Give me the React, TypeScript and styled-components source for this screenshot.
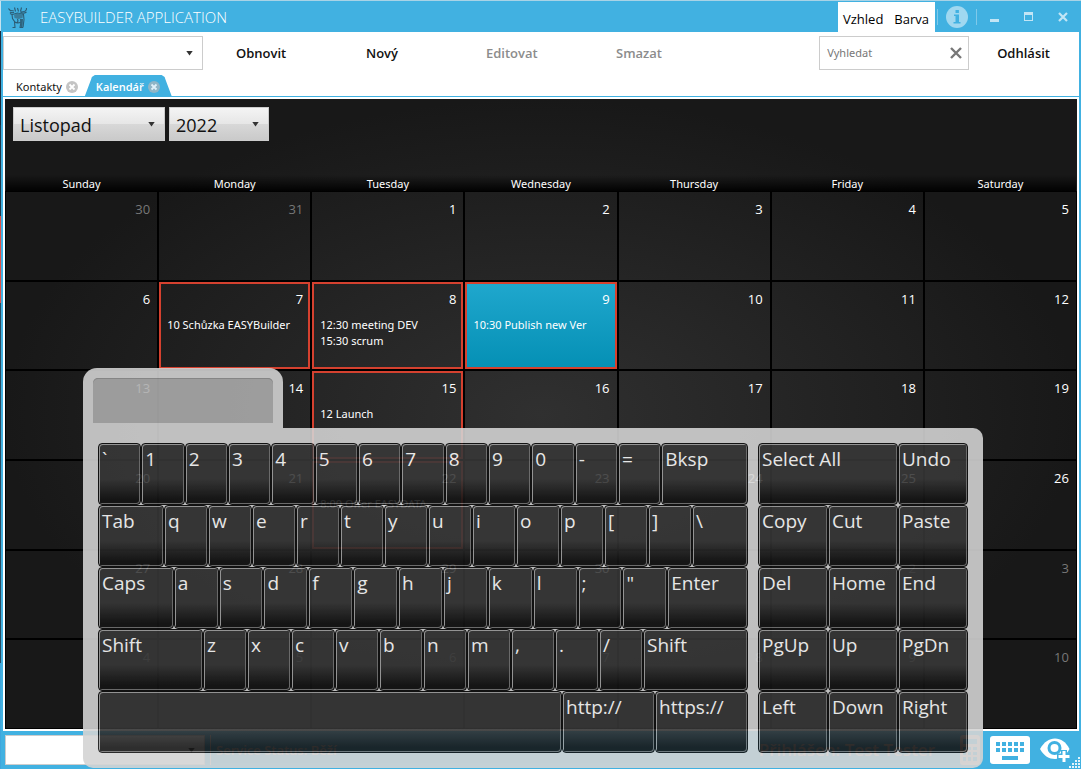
import React from "react";
import styled, { createGlobalStyle } from "styled-components";

const BLUE = "#41b1e1";

const GlobalStyle = createGlobalStyle`
  *, *::before, *::after { box-sizing: border-box; }
  body { margin: 0; background: ${BLUE}; }
  body, button, input, select {
    font-family: "Open Sans", "Noto Sans", "Liberation Sans", sans-serif;
    font-size: 12px;
  }
  button { border: 0; padding: 0; background: none; color: inherit; cursor: pointer; white-space: nowrap; }
  svg { display: block; }
`;

const SMALL_FONT = `"Noto Sans", "Open Sans", sans-serif`;

const Window = styled.div`
  position: relative;
  display: flex;
  flex-direction: column;
  min-height: 100vh;
  padding: 0 1px 0 3px;
  border-top: 1px solid #a9d3e6;
  background:
    linear-gradient(#c5e3f0 30px, #1c2b3c 30px 124px, #20394c 124px 215px, #e0524a 215px 302px, #2a4c62 302px 662px, #3fa6dd 662px) 0 0 / 1px 100% no-repeat,
    ${BLUE};
`;

const TitleBar = styled.header`
  display: flex;
  align-items: center;
  height: 31px;
  padding-left: 4px;
  color: #fff;
`;

const AppTitle = styled.h1`
  flex: 1;
  margin: 0 0 0 11px;
  font-size: 15px;
  font-weight: 300;
  line-height: 30px;
`;

const ThemeMenu = styled.div`
  display: flex;
  align-self: stretch;
  align-items: center;
  gap: 11px;
  margin-top: 1px;
  padding: 4px 6px 0 5px;
  background: #fff;
  color: #000;
  button { font-size: 13px; }
`;

const WindowButtons = styled.div`
  display: flex;
  align-items: center;
  align-self: stretch;
  color: #c2e5f5;
`;

const WindowButton = styled.button<{ $w: number; $line?: boolean }>`
  display: flex;
  justify-content: center;
  align-items: center;
  width: ${(p) => p.$w}px;
  height: 16px;
  border-right: ${(p) => (p.$line ? "1px solid #7fc9ea" : "0")};
`;

const Sheet = styled.main`
  display: flex;
  flex: 1;
  flex-direction: column;
  margin-right: 1px;
  background: #fff;
`;

const Toolbar = styled.div`
  display: flex;
  align-items: center;
  height: 41px;
  margin-bottom: 2px;
  padding-right: 29px;
`;

const SelectBox = styled.div`
  position: relative;
  display: flex;
  svg { position: absolute; right: 10px; top: calc(50% - 2px); pointer-events: none; }
`;

const PlainSelect = styled.select<{ $h: number }>`
  appearance: none;
  width: 200px;
  height: ${(p) => p.$h}px;
  border: 1px solid #ccc;
  border-radius: 0;
  background: #fff;
`;

const Commands = styled.div`
  display: grid;
  grid-template-columns: 130px 120px 130px 130px;
  flex: 1;
  padding-left: 33px;
`;

const Command = styled.button`
  font-size: 13px;
  font-weight: 600;
  line-height: 20px;
  text-align: left;
  color: #111;
  &:disabled { color: #8c8c8c; }
`;

const SearchBox = styled.label`
  display: flex;
  align-items: center;
  width: 150px;
  height: 34px;
  margin-right: 28px;
  padding: 0 6px 0 7px;
  border: 1px solid #ccc;
`;

const SearchInput = styled.input`
  flex: 1;
  min-width: 0;
  border: 0;
  padding: 0;
  outline: 0;
  font-family: ${SMALL_FONT};
  font-size: 11px;
  background: none;
  &::placeholder { color: #777; opacity: 1; }
`;

const Tabs = styled.div`
  display: flex;
  height: 22px;
  border-bottom: 1px solid ${BLUE};
`;

const Tab = styled.div<{ $active?: boolean }>`
  display: flex;
  align-items: center;
  gap: 4px;
  padding: ${(p) => (p.$active ? "2px 12px 0 11px" : "2px 7px 0 13px")};
  background: ${(p) => (p.$active ? BLUE : "none")};
  color: ${(p) => (p.$active ? "#fff" : "#111")};
  clip-path: ${(p) =>
    p.$active
      ? "polygon(0 100%, 6px 5px, 7px 2px, 10px 0, calc(100% - 10px) 0, calc(100% - 7px) 2px, calc(100% - 6px) 5px, 100% 100%)"
      : "none"};
`;

const TabLabel = styled.button<{ $active?: boolean }>`
  font-family: ${(p) => (p.$active ? "inherit" : SMALL_FONT)};
  font-size: 11px;
  font-weight: ${(p) => (p.$active ? 600 : 400)};
  line-height: 20px;
`;

const CalendarPanel = styled.section`
  display: flex;
  flex: 1;
  flex-direction: column;
  margin: 2px;
  padding: 0 1px 1px;
  background: radial-gradient(ellipse 50% 50% at 50% 50%, #303030, #181818);
`;

const Pickers = styled.div`
  display: flex;
  align-items: flex-start;
  gap: 4px;
  height: 76px;
  padding: 8px 7px;
`;

const PickerSelect = styled.select<{ $w: number }>`
  appearance: none;
  width: ${(p) => p.$w}px;
  height: 34px;
  padding: 1px 6px 0;
  border: 1px solid #ccc;
  border-radius: 0;
  background: linear-gradient(#f4f4f4, #e6e6e6 50%, #d8d8d8 50%, #cacaca);
  font-size: 18px;
  color: #111;
`;

const CalendarTable = styled.table`
  display: flex;
  flex: 1;
  flex-direction: column;
  color: #fff;
  tr { display: grid; grid-template-columns: repeat(7, minmax(0, 1fr)); gap: 2px; }
  thead { display: block; padding-bottom: 1px; background: linear-gradient(rgba(0,0,0,0), #000); }
  tbody { display: grid; flex: 1; grid-template-rows: repeat(6, minmax(0, 1fr)); gap: 2px; }
`;

const DayName = styled.th`
  height: 16px;
  padding: 0;
  font-family: ${SMALL_FONT};
  font-size: 11px;
  font-weight: 400;
  line-height: 18px;
`;

const DayCell = styled.td<{ $events?: boolean; $today?: boolean }>`
  min-height: 60px;
  padding: 6px 5px 0 6px;
  border: 2px solid ${(p) => (p.$events ? "#d5412f" : "transparent")};
  background: ${(p) => (p.$today ? "linear-gradient(#1fa7cd, #0590b5)" : "none")};
  box-shadow: 0 0 0 1px #000;
`;

const DayNumber = styled.div<{ $muted?: boolean }>`
  font-size: 13px;
  line-height: 18px;
  text-align: right;
  color: ${(p) => (p.$muted ? "#777" : "#fff")};
`;

const EventList = styled.ul`
  margin: 9px 0 0;
  padding: 0;
  list-style: none;
  font-family: ${SMALL_FONT};
  font-size: 11px;
  line-height: 16px;
  white-space: nowrap;
`;

const StatusBar = styled.footer`
  display: flex;
  align-items: center;
  height: 38px;
  padding: 0 10px 0 2px;
  color: #ead0c6;
`;

const StatusText = styled.span<{ $size: number; $push?: boolean }>`
  margin-left: ${(p) => (p.$push ? "auto" : "5px")};
  padding-left: 5px;
  border-left: ${(p) => (p.$push ? "0" : "1px solid #ead0c6")};
  font-size: ${(p) => p.$size}px;
  font-weight: 600;
  line-height: 30px;
`;

const StatusIcons = styled.div`
  display: flex;
  align-items: center;
  gap: 10px;
  margin-left: 25px;
`;

const Grip = styled.svg`
  position: absolute;
  right: 1px;
  bottom: 1px;
`;

const Keyboard = styled.div`
  position: absolute;
  left: 83px;
  right: 98px;
  bottom: 1px;
  opacity: 0.89;
`;

const KeyboardTab = styled.div`
  width: 200px;
  height: 60px;
  padding: 10px 10px 5px;
  border-radius: 14px 14px 0 0;
  background: #d4d4d4;
`;

const KeyboardHandle = styled.div`
  height: 45px;
  border-radius: 5px 5px 0 0;
  background: #acacac;
  box-shadow: inset 0 1px 0 #929292;
`;

const KeyboardBody = styled.div`
  display: flex;
  gap: 10px;
  padding: 15px;
  border-radius: 0 10px 10px 10px;
  background: #d4d4d4;
`;

const KeyBlock = styled.div<{ $grow: number }>`
  flex: ${(p) => p.$grow} 1 0;
  min-width: 0;
`;

const KeyRow = styled.div<{ $widths: number[] }>`
  display: grid;
  grid-template-columns: ${(p) => p.$widths.map((w) => `minmax(0, ${w}fr)`).join(" ")};
`;

const Key = styled.button`
  height: 62px;
  padding: 0 0 30px 3px;
  border: 1px solid #101010;
  border-radius: 4px;
  background: linear-gradient(#383838 58%, #151515 92%);
  box-shadow: inset 1px 1px 0 #a2a2a2, inset -1px -1px 0 #747474;
  color: #fff;
  font-size: 19px;
  line-height: 30px;
  text-align: left;
`;

type KeySpec = [string, number];
const each = (chars: string, width: number): KeySpec[] => chars.split("").map((c) => [c, width]);

const mainRows: KeySpec[][] = [
  [...each("`1234567890-=", 1), ["Bksp", 2]],
  [["Tab", 66], ...each("qwertyuiop[]", 44), ["\\", 56]],
  [["Caps", 76], ...each("asdfghjkl;\"", 45), ["Enter", 81]],
  [["Shift", 105], ...each("zxcvbnm,./", 44), ["Shift", 105]],
  [[" ", 464], ["http://", 93], ["https://", 93]],
];

const sideRows: KeySpec[][] = [
  [["Select All", 2], ["Undo", 1]],
  [["Copy", 1], ["Cut", 1], ["Paste", 1]],
  [["Del", 1], ["Home", 1], ["End", 1]],
  [["PgUp", 1], ["Up", 1], ["PgDn", 1]],
  [["Left", 1], ["Down", 1], ["Right", 1]],
];

const dayNames = ["Sunday", "Monday", "Tuesday", "Wednesday", "Thursday", "Friday", "Saturday"];
const events: Record<number, string[]> = {
  7: ["10 Schůzka EASYBuilder"],
  8: ["12:30 meeting DEV", "15:30 scrum"],
  9: ["10:30 Publish new Ver"],
  15: ["12 Launch"],
  22: ["8:00 Offer EASYDATA"],
};

const days = Array.from({ length: 42 }, (_, i) => {
  const n = i - 1;
  if (n < 1) return { day: n + 31, muted: true };
  if (n > 30) return { day: n - 30, muted: true };
  return { day: n, muted: false };
});
const weeks = Array.from({ length: 6 }, (_, w) => days.slice(w * 7, w * 7 + 7));

const Arrow = () => (
  <svg width="7" height="5" viewBox="0 0 7 5"><path d="M0.3 0h6.4L3.5 4.6z" fill="#333" /></svg>
);

const Logo = () => (
  <svg width="22" height="24" viewBox="0 0 22 24" fill="none" stroke="#2c5c74" strokeWidth="1.1">
    <path d="M1.500 3.500c1 2 3 2.500 5 2M3 7c1.500 1 3 .8 4 0M7.500 2.500l1 4M10.500 3l1 3.500M19.500 3c.5 3-2 4-6 4M19.500 7c-2 1.500-4 1.500-6 .5M14.500 2.500l-1 4" />
    <path d="M3 8.500l2 1 .5 4 2 3 .5 6M5.500 9.500l5-1.500 6 1.500.5 5-1 8M10.500 14l.5 2-1 2M13.500 14l.5 3-1 5.500M8 17c2 1.500 4 1 6 0M5.500 22.500h3M12.500 22.500h3.500" />
    <path d="M7 9.500l5-1 4 1.500-.5 3-4 1-4-1z" fill="#3a7d9b" stroke="none" />
    <path d="M13.500 14h2.500l-.5 8h-2z" fill="#2f657f" stroke="none" />
  </svg>
);

const CloseDot = ({ fill, mark }: { fill: string; mark: string }) => (
  <svg width="12" height="12" viewBox="0 0 12 12">
    <circle cx="6" cy="6" r="6" fill={fill} />
    <path d="M3.5 3.5l5 5M8.5 3.5l-5 5" stroke={mark} strokeWidth="1.8" />
  </svg>
);

const InfoIcon = () => (
  <svg width="22" height="22" viewBox="0 0 22 22">
    <circle cx="11" cy="11" r="11" fill="#a0d8f0" />
    <path d="M9.500 4h3.400v3H9.500zM8 8.500h5v7.500h1.500v1.500h-7v-1.500H9.500v-6H8z" fill={BLUE} />
  </svg>
);

const CalculatorIcon = () => (
  <svg width="20" height="30" viewBox="0 0 20 30">
    <path
      fillRule="evenodd"
      d="M3 0h14a3 3 0 0 1 3 3v24a3 3 0 0 1-3 3H3a3 3 0 0 1-3-3V3a3 3 0 0 1 3-3zM3 4h14v5H3zM3 12h3v3H3zM8 12h3v3H8zM13 12h4v3h-4zM3 17h3v3H3zM8 17h3v3H8zM13 17h4v3h-4zM3 22h3v4H3zM8 22h3v4H8zM13 22h4v4h-4z"
      fill="#ead0c6"
    />
  </svg>
);

const KeyboardIcon = () => (
  <svg width="40" height="28" viewBox="0 0 40 28">
    <rect width="40" height="28" rx="3" fill="#fff" />
    <path
      d="M6 6h4v4H6zM12 6h4v4h-4zM18 6h4v4h-4zM24 6h4v4h-4zM30 6h4v4h-4zM6 12h4v4H6zM12 12h4v4h-4zM18 12h4v4h-4zM24 12h4v4h-4zM30 12h4v4h-4zM12 20h16v4H12z"
      fill={BLUE}
    />
  </svg>
);

const EyeIcon = () => (
  <svg width="30" height="26" viewBox="0 0 30 26">
    <path d="M0 12C4 5 9 1.500 15 1.500S26 5 29.500 12C26 18.500 21 22 15 22S4 19 0 12z" fill="#fff" />
    <circle cx="14.500" cy="11" r="7" fill={BLUE} />
    <circle cx="14.500" cy="11" r="4" fill="#fff" />
    <path d="M24 13v13M17 19.500h13" stroke={BLUE} strokeWidth="6" />
    <path d="M24 14v11M18.500 19.500h11" stroke="#fff" strokeWidth="3" />
  </svg>
);

const gripDots = [[9, 0], [6, 3], [9, 3], [3, 6], [6, 6], [9, 6], [0, 9], [3, 9], [6, 9], [9, 9]];

const renderRows = (rows: KeySpec[][]) =>
  rows.map((row, r) => (
    <KeyRow key={r} $widths={row.map(([, width]) => width)}>
      {row.map(([label], k) => (
        <Key key={k} type="button" aria-label={label === " " ? "Space" : undefined}>
          {label}
        </Key>
      ))}
    </KeyRow>
  ));

export default function App() {
  return (
    <>
      <GlobalStyle />
      <Window>
        <TitleBar>
          <Logo />
          <AppTitle>EASYBUILDER APPLICATION</AppTitle>
          <ThemeMenu>
            <button type="button">Vzhled</button>
            <button type="button">Barva</button>
          </ThemeMenu>
          <WindowButtons>
            <WindowButton $w={3} $line tabIndex={-1} aria-hidden="true" />
            <WindowButton $w={39} $line aria-label="Info"><InfoIcon /></WindowButton>
            <WindowButton $w={35} aria-label="Minimize">
              <svg width="10" height="10"><rect y="7" width="9" height="3" fill="currentColor" /></svg>
            </WindowButton>
            <WindowButton $w={33} aria-label="Maximize">
              <svg width="9" height="9"><path d="M0 0h9v9H0zM1 3v5h7V3z" fill="currentColor" fillRule="evenodd" /></svg>
            </WindowButton>
            <WindowButton $w={35} aria-label="Close">
              <svg width="10" height="10"><path d="M1 1l8 8M9 1l-8 8" stroke="currentColor" strokeWidth="2.200" /></svg>
            </WindowButton>
          </WindowButtons>
        </TitleBar>
        <Sheet>
          <Toolbar>
            <SelectBox>
              <PlainSelect $h={34} aria-label="View" />
              <Arrow />
            </SelectBox>
            <Commands>
              <Command type="button">Obnovit</Command>
              <Command type="button">Nový</Command>
              <Command type="button" disabled>Editovat</Command>
              <Command type="button" disabled>Smazat</Command>
            </Commands>
            <SearchBox>
              <SearchInput placeholder="Vyhledat" aria-label="Vyhledat" />
              <button type="button" aria-label="Clear">
                <svg width="12" height="12"><path d="M1 1l10 10M11 1L1 11" stroke="#777" strokeWidth="2.400" /></svg>
              </button>
            </SearchBox>
            <Command type="button">Odhlásit</Command>
          </Toolbar>
          <Tabs>
            <Tab>
              <TabLabel type="button">Kontakty</TabLabel>
              <CloseDot fill="#c4c4c4" mark="#fff" />
            </Tab>
            <Tab $active>
              <TabLabel type="button" $active>Kalendář</TabLabel>
              <CloseDot fill="#8fb5c6" mark="#dff1f9" />
            </Tab>
          </Tabs>
          <CalendarPanel>
            <Pickers>
              <SelectBox>
                <PickerSelect $w={152} aria-label="Month"><option>Listopad</option></PickerSelect>
                <Arrow />
              </SelectBox>
              <SelectBox>
                <PickerSelect $w={100} aria-label="Year"><option>2022</option></PickerSelect>
                <Arrow />
              </SelectBox>
            </Pickers>
            <CalendarTable>
              <thead>
                <tr>{dayNames.map((d) => <DayName key={d} scope="col">{d}</DayName>)}</tr>
              </thead>
              <tbody>
                {weeks.map((week, w) => (
                  <tr key={w}>
                    {week.map(({ day, muted }) => {
                      const list = muted ? undefined : events[day];
                      return (
                        <DayCell key={day} $events={!!list} $today={!muted && day === 9}>
                          <DayNumber $muted={muted}>{day}</DayNumber>
                          {list && <EventList>{list.map((e) => <li key={e}>{e}</li>)}</EventList>}
                        </DayCell>
                      );
                    })}
                  </tr>
                ))}
              </tbody>
            </CalendarTable>
          </CalendarPanel>
        </Sheet>
        <StatusBar>
          <SelectBox>
            <PlainSelect $h={30} aria-label="Service" />
            <Arrow />
          </SelectBox>
          <StatusText $size={13}>Service Status: Běží</StatusText>
          <StatusText $size={17} $push>Přihlášen: Test Tester</StatusText>
          <StatusIcons>
            <button type="button" aria-label="Calculator"><CalculatorIcon /></button>
            <button type="button" aria-label="Keyboard"><KeyboardIcon /></button>
            <button type="button" aria-label="Add view"><EyeIcon /></button>
          </StatusIcons>
        </StatusBar>
        <Grip width="11" height="11" fill="#e4f4fb">
          {gripDots.map(([x, y]) => <rect key={`${x}-${y}`} x={x} y={y} width="2" height="2" />)}
        </Grip>
        <Keyboard>
          <KeyboardTab><KeyboardHandle /></KeyboardTab>
          <KeyboardBody>
            <KeyBlock $grow={65}>{renderRows(mainRows)}</KeyBlock>
            <KeyBlock $grow={21}>{renderRows(sideRows)}</KeyBlock>
          </KeyboardBody>
        </Keyboard>
      </Window>
    </>
  );
}
